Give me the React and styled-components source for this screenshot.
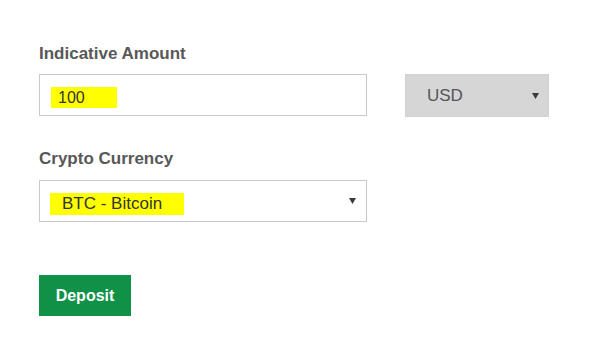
import React from "react";
import styled, { createGlobalStyle } from "styled-components";

const Global = createGlobalStyle`
  html, body { margin: 0; padding: 0; background: #fff; }
  body { font-family: "Liberation Sans", Arial, sans-serif; }
`;

const Page = styled.div`
  width: 609px;
  height: 359px;
  box-sizing: border-box;
  padding: 44px 0 0 39px;
  display: flex;
  flex-direction: column;
`;

const Field = styled.div`
  display: flex;
  flex-direction: column;
  margin-bottom: ${(p) => p.$mb || 0}px;
`;

const Label = styled.label`
  font-size: 17px;
  line-height: 20px;
  font-weight: bold;
  color: #585858;
  margin-bottom: ${(p) => p.$mb || 10}px;
`;

const Row = styled.div`
  display: flex;
  gap: 38px;
`;

const Box = styled.div`
  box-sizing: border-box;
  width: ${(p) => p.$w}px;
  height: ${(p) => p.$h || 42}px;
  border: 1px solid ${(p) => (p.$grey ? "#d2d2d2" : "#c9c9c9")};
  background: ${(p) => (p.$grey ? "#d6d6d6" : "#fff")};
  display: flex;
  align-items: center;
  position: relative;
  padding-left: ${(p) => p.$pl || 10}px;
  padding-right: ${(p) => p.$pr || 9}px;
`;

const Mark = styled.span`
  display: inline-block;
  background: #ffff00;
  color: #333;
  font-size: ${(p) => p.$fs}px;
  line-height: ${(p) => p.$h}px;
  height: ${(p) => p.$h}px;
  width: ${(p) => p.$w}px;
  box-sizing: border-box;
  padding-left: ${(p) => p.$pl}px;
  margin-top: ${(p) => p.$mt || 0}px;
`;

const Value = styled.span`
  flex: 1;
  font-size: 17px;
  color: #555;
  padding-left: 11px;
`;

const Arrow = styled.svg`
  width: 7px;
  height: 6px;
  margin-left: auto;
  flex: none;
`;

const Caret = () => (
  <Arrow viewBox="0 0 7 6">
    <polygon points="0,0 7,0 3.5,6" fill="#3a3a3a" />
  </Arrow>
);

const Button = styled.button`
  align-self: flex-start;
  box-sizing: border-box;
  width: 92px;
  height: 41px;
  border: none;
  background: #0f9147;
  color: #fff;
  font-family: "Liberation Sans", Arial, sans-serif;
  font-weight: bold;
  font-size: 16px;
  padding: 0;
  cursor: pointer;
`;

export default function App() {
  return (
    <>
      <Global />
      <Page>
        <Field $mb={32}>
          <Label>Indicative Amount</Label>
          <Row>
            <Box $w={328} $pl={11}>
              <Mark $fs={16} $h={21} $w={66} $pl={7} $mt={4}>100</Mark>
            </Box>
            <Box $w={144} $grey $pl={10} $pr={9} $h={43}>
              <Value>USD</Value>
              <Caret />
            </Box>
          </Row>
        </Field>
        <Field $mb={53}>
          <Label $mb={11}>Crypto Currency</Label>
          <Box $w={328} $pl={10} $pr={10}>
            <Mark $fs={17} $h={22} $w={134} $pl={12} $mt={6}>BTC - Bitcoin</Mark>
            <Caret />
          </Box>
        </Field>
        <Button>Deposit</Button>
      </Page>
    </>
  );
}
